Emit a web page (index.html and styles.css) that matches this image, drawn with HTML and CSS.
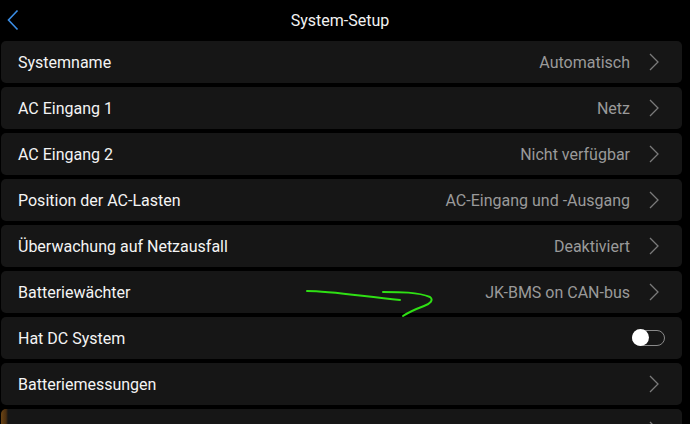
FILE: index.html
```html
<!DOCTYPE html>
<html lang="de">

<head>
    <meta charset="UTF-8">
    <meta name="viewport" content="width=device-width, initial-scale=1.0">
    <title>System-Setup</title>
    <link rel="stylesheet" href="styles.css">
</head>

<body>
    <header class="topbar">
        <button class="back" aria-label="Zurück">
            <svg width="12" height="22" viewBox="0 0 12 22">
                <polyline points="10.5,1.5 1.5,11 10.5,20.5" fill="none" stroke="#3b8ee6" stroke-width="1.6" />
            </svg>
        </button>
        <h1>System-Setup</h1>
    </header>

    <main class="list">
        <div class="row">
            <span class="label">Systemname</span>
            <span class="value">Automatisch</span>
            <svg class="chev" width="10" height="18" viewBox="0 0 10 18"><polyline points="1,1 9,9 1,17" /></svg>
        </div>
        <div class="row">
            <span class="label">AC Eingang 1</span>
            <span class="value">Netz</span>
            <svg class="chev" width="10" height="18" viewBox="0 0 10 18"><polyline points="1,1 9,9 1,17" /></svg>
        </div>
        <div class="row">
            <span class="label">AC Eingang 2</span>
            <span class="value">Nicht verfügbar</span>
            <svg class="chev" width="10" height="18" viewBox="0 0 10 18"><polyline points="1,1 9,9 1,17" /></svg>
        </div>
        <div class="row">
            <span class="label">Position der AC-Lasten</span>
            <span class="value">AC-Eingang und -Ausgang</span>
            <svg class="chev" width="10" height="18" viewBox="0 0 10 18"><polyline points="1,1 9,9 1,17" /></svg>
        </div>
        <div class="row">
            <span class="label">Überwachung auf Netzausfall</span>
            <span class="value">Deaktiviert</span>
            <svg class="chev" width="10" height="18" viewBox="0 0 10 18"><polyline points="1,1 9,9 1,17" /></svg>
        </div>
        <div class="row">
            <span class="label">Batteriewächter</span>
            <span class="value">JK-BMS on CAN-bus</span>
            <svg class="chev" width="10" height="18" viewBox="0 0 10 18"><polyline points="1,1 9,9 1,17" /></svg>
        </div>
        <div class="row">
            <span class="label">Hat DC System</span>
            <span class="switch"><span class="knob"></span></span>
        </div>
        <div class="row">
            <span class="label">Batteriemessungen</span>
            <svg class="chev" width="10" height="18" viewBox="0 0 10 18"><polyline points="1,1 9,9 1,17" /></svg>
        </div>
        <div class="row row-edge">
            <span class="label"></span>
            <svg class="chev" width="10" height="18" viewBox="0 0 10 18"><polyline points="1,1 9,9 1,17" /></svg>
        </div>
    </main>

    <!-- hand drawn marker on the screenshot -->
    <svg class="scribble" width="690" height="424" viewBox="0 0 690 424">
        <path d="M307 291 C 330 291, 360 296, 400 300" />
        <path d="M383 292 C 400 292, 418 292, 430 297 C 434 300, 430 304, 424 306 C 416 309, 409 312, 403 316" />
    </svg>
</body>

</html>
```

FILE: styles.css
```css
body {
    margin: 0;
    background: #000;
    color: #fff;
    font-family: Roboto, "Liberation Sans", sans-serif;
    height: 424px;
    overflow: hidden;
    position: relative;
}

.topbar {
    height: 41px;
    display: flex;
    align-items: center;
    justify-content: center;
    position: relative;
    padding: 0 10px 0 0;
}

.topbar h1 {
    margin: 0;
    font-size: 16px;
    font-weight: 400;
    color: #f2f2f2;
}

.back {
    position: absolute;
    left: 7px;
    top: 9px;
    background: none;
    border: none;
    padding: 0;
    cursor: pointer;
}

.list {
    display: flex;
    flex-direction: column;
    gap: 4px;
    padding: 0 8px 0 1px;
    height: 383px;
    overflow: hidden;
}

.row {
    height: 42px;
    flex-shrink: 0;
    display: flex;
    align-items: center;
    background: #161616;
    border-radius: 5px;
    padding: 0 23px 0 17px;
    font-size: 16px;
}

.label {
    flex: 1;
    color: #f4f4f4;
}

.value {
    color: #9a9a9a;
    margin-right: 19px;
}

.chev polyline {
    fill: none;
    stroke: #7a7a7a;
    stroke-width: 1.3;
}

.switch {
    width: 31px;
    height: 14px;
    border: 1px solid #8a8a8a;
    border-radius: 8px;
    position: relative;
    margin-right: -6px;
}

.knob {
    position: absolute;
    left: -1px;
    top: -2px;
    width: 17px;
    height: 17px;
    border-radius: 50%;
    background: #fff;
}

.row-edge {
    background: linear-gradient(90deg, #6b4414 0, #4a2e10 5px, #161616 7px);
}

.scribble {
    position: absolute;
    left: 0;
    top: 0;
    pointer-events: none;
}

.scribble path {
    fill: none;
    stroke: #2fe014;
    stroke-width: 2;
    stroke-linecap: round;
}
```
